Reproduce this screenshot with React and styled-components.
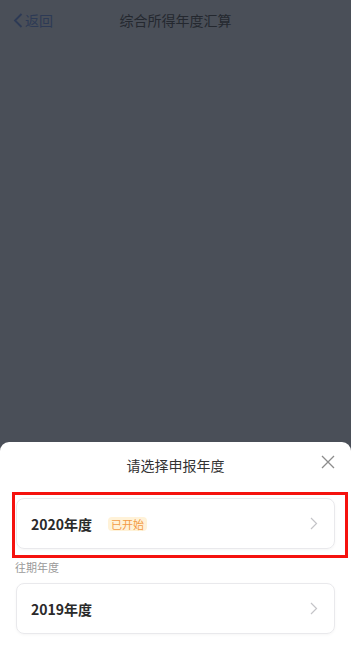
import React from "react";
import styled, { createGlobalStyle } from "styled-components";

const Global = createGlobalStyle`
  html, body { margin: 0; padding: 0; }
  body { font-family: "Noto Sans CJK SC", "Noto Sans", sans-serif; }
`;

const Page = styled.div`
  width: 351px;
  height: 645px;
  background: #4a4f58;
  display: flex;
  flex-direction: column;
  overflow: hidden;
`;

const Header = styled.div`
  height: 40px;
  display: flex;
  align-items: center;
  position: relative;
  padding: 0 0 0 13px;
`;

const Back = styled.div`
  display: flex;
  align-items: center;
  gap: 2px;
  color: #2d3a55;
  font-size: 14px;
`;

const Title = styled.div`
  position: absolute;
  left: 0;
  right: 0;
  text-align: center;
  font-size: 14px;
  color: #24282f;
  pointer-events: none;
`;

const Spacer = styled.div`
  flex: 1;
`;

const Sheet = styled.div`
  height: 203px;
  background: #ffffff;
  border-radius: 9px 9px 0 0;
  display: flex;
  flex-direction: column;
`;

const SheetHead = styled.div`
  height: 46px;
  display: flex;
  align-items: center;
  justify-content: center;
  position: relative;
  font-size: 14px;
  color: #333333;
`;

const Close = styled.div`
  position: absolute;
  right: 16px;
  top: 13px;
  width: 14px;
  height: 14px;
  display: flex;
`;

const Highlight = styled.div`
  margin: 4px 3px 0 12px;
  border: 3px solid #f5120e;
  padding: 3px 10px 6px 1px;
`;

const Card = styled.div`
  height: 51px;
  box-sizing: border-box;
  border: 1px solid #e9e9ec;
  border-radius: 8px;
  box-shadow: 0 1px 3px rgba(0, 0, 0, 0.04);
  display: flex;
  align-items: center;
  padding: 0 16px 0 14px;
  margin: ${(p) => p.$margin || "0"};
`;

const Year = styled.div`
  font-size: 14px;
  font-weight: 700;
  color: #2a2a2a;
`;

const Badge = styled.span`
  margin-left: 16px;
  background: #fff2d8;
  color: #f39b45;
  font-size: 11px;
  line-height: 14px;
  padding: 0 3px;
  border-radius: 4px;
`;

const Grow = styled.div`
  flex: 1;
`;

const Label = styled.div`
  font-size: 11px;
  line-height: 18px;
  color: #9a9a9a;
  padding-left: 15px;
  margin: 0 0 7px;
`;

const Chevron = () => (
  <svg width="8" height="13" viewBox="0 0 8 13">
    <path d="M1 1 L6.5 6.5 L1 12" fill="none" stroke="#c4c4c8" strokeWidth="1.2" />
  </svg>
);

export default function App() {
  return (
    <>
      <Global />
      <Page>
        <Header>
          <Back>
            <svg width="10" height="15" viewBox="0 0 10 15">
              <path d="M8.5 1 L2 7.5 L8.5 14" fill="none" stroke="#2d3a55" strokeWidth="1.8" />
            </svg>
            <span>返回</span>
          </Back>
          <Title>综合所得年度汇算</Title>
        </Header>
        <Spacer />
        <Sheet>
          <SheetHead>
            请选择申报年度
            <Close>
              <svg width="14" height="14" viewBox="0 0 14 14">
                <path d="M1 1 L13 13 M13 1 L1 13" stroke="#8c8c8c" strokeWidth="1.3" />
              </svg>
            </Close>
          </SheetHead>
          <Highlight>
            <Card>
              <Year>2020年度</Year>
              <Badge>已开始</Badge>
              <Grow />
              <Chevron />
            </Card>
          </Highlight>
          <Label>往期年度</Label>
          <Card $margin="0 16px">
            <Year>2019年度</Year>
            <Grow />
            <Chevron />
          </Card>
        </Sheet>
      </Page>
    </>
  );
}
